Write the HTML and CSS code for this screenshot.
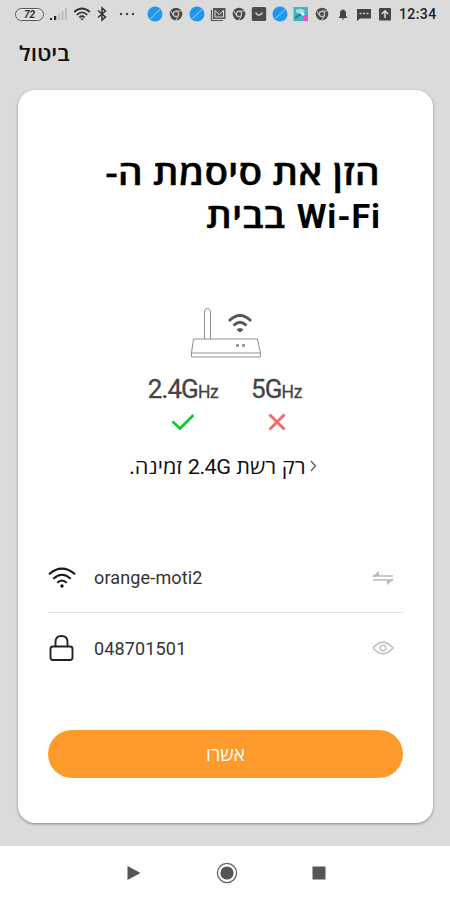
FILE: index.html
```html
<!DOCTYPE html>
<html lang="he">
<head>
<meta charset="utf-8">
<title>Wi-Fi</title>
<link rel="stylesheet" href="styles.css">
</head>
<body>
<svg width="0" height="0" class="defs">
  <symbol id="planet" viewBox="0 0 16 16"><circle cx="8" cy="8" r="7.5" fill="#1f97ec"/><path d="M3.500 12.500L13 3.500" stroke="#a8dcfa" stroke-width=".9"/></symbol>
  <symbol id="chrome" viewBox="0 0 16 16"><circle cx="8" cy="8" r="6.3" fill="#4b4b4b"/><path d="M8 5h5.4M5.4 9.5L2.8 5M10.6 9.5L8 14" stroke="#c8c8c8" stroke-width="1"/><circle cx="8" cy="8" r="2.6" fill="#4b4b4b" stroke="#c8c8c8" stroke-width="1.1"/></symbol>
</svg>
<div class="screen">
  <header class="status">
    <span class="battery">72</span>
    <svg class="signal" width="19" height="14" viewBox="0 0 19 14"><path d="M1 11h2v2H1zM5 9h2.2v4H5z" fill="#222"/><path d="M9 7h2v6H9zM12.500 4h2v9h-2zM16 1h2v12h-2z" fill="#bbb"/></svg>
    <svg class="wifi-s" width="18" height="16" viewBox="0 0 18 16" fill="none" stroke="#333" stroke-width="1.8"><path d="M1.200 6Q9-1 16.800 6M3.800 8.800Q9 4 14.200 8.800M6.300 11.400Q9 9 11.700 11.400"/><path d="M7.200 12.600h3.600L9 14.600z" fill="#333" stroke="none"/></svg>
    <svg class="bt" width="12" height="16" viewBox="0 0 12 16" fill="none" stroke="#333" stroke-width="1.500"><path d="M2 4.500L9.500 11 6 14V2l3.500 3L2 11.500"/></svg>
    <svg class="dots" width="16" height="4" viewBox="0 0 16 4" fill="#444"><circle cx="2" cy="2" r="1.200"/><circle cx="8" cy="2" r="1.200"/><circle cx="14" cy="2" r="1.200"/></svg>
    <div class="notes">
      <svg><use href="#planet"/></svg>
      <svg><use href="#chrome"/></svg>
      <svg><use href="#planet"/></svg>
      <svg viewBox="0 0 16 16"><path d="M1.500 4v10.500H13" fill="none" stroke="#555" stroke-width="1.200"/><path d="M3 2h12.500v11H3z" fill="#555"/><path d="M5 4.500v6.500h8.500V4.500L9.200 8.500z" fill="none" stroke="#ddd" stroke-width="1"/></svg>
      <svg><use href="#chrome"/></svg>
      <svg viewBox="0 0 16 16"><rect x=".8" y="1" width="14.400" height="14" rx="1.500" fill="#4b4b4b"/><path d="M4.500 6.500Q8 12 11.500 6.500" fill="none" stroke="#ccc" stroke-width="1.400"/></svg>
      <svg><use href="#planet"/></svg>
      <svg viewBox="0 0 16 16"><path d="M.5 1h14.500v14H.5z" fill="#3cb8c4"/><path d="M3 4q5-3 9 1l-3 4-6-3z" fill="#a6dce2"/><path d="M2 12l6-4" stroke="#267b89" stroke-width="2"/><path d="M10.500 9h4.500v6h-4.500z" fill="#f04dc1"/><path d="M7 6l5 2-2 2z" fill="#fff"/></svg>
      <svg><use href="#chrome"/></svg>
      <svg viewBox="0 0 16 16" fill="#444"><path d="M4 12v-1l1-1V7q0-3 3-3.500 3 .5 3 3.500v3l1 1v1zM7 12.500h2v1H7z"/></svg>
      <svg viewBox="0 0 16 16"><path d="M1 3h14v9.500H4L1 15z" fill="#444"/><path d="M3.500 7.500h2M7 7.500h2M10.500 7.500h2" stroke="#ccc" stroke-width="1.500"/></svg>
      <svg viewBox="0 0 16 16"><rect x="2" y="2" width="12" height="12.500" rx="1" fill="#444"/><path d="M8 12V5M4.800 8L8 4.800 11.200 8" fill="none" stroke="#ddd" stroke-width="1.500"/></svg>
    </div>
    <time>12:34</time>
  </header>
  <div class="cancel"><span dir="rtl">ביטול</span></div>
  <main class="card">
    <h1 dir="rtl"><span class="wide">הזן את סיסמת ה-</span><br><bdi>Wi-Fi</bdi> <span class="wide">בבית</span></h1>
    <svg class="router" width="72" height="52" viewBox="0 0 72 52" fill="none" stroke="#909090" stroke-width="1">
      <path d="M14.500 32V5q0-3.500 3-3.500t3 3.500v27M3.500 32h64l3 14v4H1.500v-4zM1.500 46h69"/>
      <g stroke="#555" stroke-width="2.600"><path d="M39 14Q50 3 61 14M43.500 18.500Q50 12 56.500 18.500"/></g>
      <path d="M46.500 22.500Q50 19.500 53.500 22.500L50 25.500z" fill="#555" stroke="none"/>
      <path d="M46 38.500h3M52 38.500h3" stroke="#8a8a8a" stroke-width="2.500"/>
    </svg>
    <div class="bands">
      <div class="band b24"><span class="ghz">2.4G<small>Hz</small></span>
        <svg width="24" height="18" viewBox="0 0 24 18"><path d="M1.500 8.500l7.500 7L22.500 2" fill="none" stroke="#16c72e" stroke-width="2.800"/></svg></div>
      <div class="band b5"><span class="ghz">5G<small>Hz</small></span>
        <svg width="18" height="18" viewBox="0 0 18 18"><path d="M1.500 1.500l15 15M16.500 1.500l-15 15" stroke="#f26d6d" stroke-width="3"/></svg></div>
    </div>
    <div class="only"><span dir="rtl" class="only-text">רק רשת <bdi>2.4G</bdi> זמינה.</span><svg width="7" height="12" viewBox="0 0 7 12"><path d="M1 1L5.500 6 1 11" fill="none" stroke="#555" stroke-width="1.200"/></svg></div>
    <div class="field first">
      <svg width="28" height="22" viewBox="0 0 28 22" fill="none" stroke="#181818" stroke-width="2"><path d="M1 7.300Q14-4 27 7.300M5.300 11.800Q14 3.800 22.700 11.800M9.300 15.800Q14 11.300 18.700 15.800"/><circle cx="14" cy="19" r="1.700" fill="#181818" stroke="none"/></svg>
      <span class="ssid">orange-moti2</span>
      <svg class="end" width="22" height="16" viewBox="0 0 22 16" fill="none" stroke="#bbb" stroke-width="1.700"><path d="M21 6H1M1 10h20"/><path d="M0 6.800L7 1v5zM22 9.200L15 15v-5z" fill="#bbb" stroke="none"/></svg>
    </div>
    <div class="field">
      <svg width="28" height="28" viewBox="0 0 28 28" fill="none" stroke="#222" stroke-width="1.900"><rect x="2.500" y="12.500" width="22" height="13.500" rx="2.500"/><path d="M7.500 12V8q0-6 6-6t6 6v4"/></svg>
      <span class="pass">048701501</span>
      <svg class="end" width="22" height="16" viewBox="0 0 22 16" fill="none" stroke="#bbb" stroke-width="1.300"><path d="M1 8Q11-3.500 21 8 11 19.500 1 8z"/><circle cx="11" cy="8" r="2.800"/></svg>
    </div>
    <button class="ok" dir="rtl">אשרו</button>
  </main>
  <nav>
    <svg width="14" height="16" viewBox="0 0 14 16"><path d="M.5 1L13.500 8 .5 15z" fill="#555"/></svg>
    <svg width="22" height="22" viewBox="0 0 22 22"><circle cx="11" cy="11" r="9.600" fill="none" stroke="#666" stroke-width="1.300"/><circle cx="11" cy="11" r="6.600" fill="#555"/></svg>
    <svg width="14" height="14" viewBox="0 0 14 14"><path d="M.5.5h13v13H.5z" fill="#555"/></svg>
  </nav>
</div>
</body>
</html>
```
FILE: styles.css
```css
* { box-sizing: border-box; }
body { margin: 0; font-family: Roboto, sans-serif; color: #111; }
svg { display: block; flex: none; }
.defs { position: absolute; }
.screen { width: 450px; height: 900px; background: #dbdbdb; display: flex; flex-direction: column; overflow: hidden; }
.status { height: 28px; display: flex; align-items: center; padding-left: 15px; flex: none; }
.battery { width: 29px; height: 13px; border: 1px solid #555; border-radius: 7px; font-size: 10px; line-height: 11px; font-weight: 700; font-style: italic; text-align: center; box-shadow: inset 0 0 0 1px #eee; color: #333; }
.signal { margin-left: 5px; }
.wifi-s { margin-left: 5px; }
.bt { margin-left: 5px; }
.dots { margin-left: 11px; }
.notes { display: flex; width: 251px; margin-left: 12px; }
.notes svg { width: 16px; height: 16px; margin-right: 4.900px; }
time { font-size: 14px; font-weight: 500; letter-spacing: .4px; margin-left: 1px; color: #222; }
.cancel { height: 62px; padding: 12px 0 0 19px; font-family: "Open Sans", sans-serif; font-size: 20px; line-height: 28px; font-weight: 600; flex: none; }
.cancel span { display: inline-block; transform: scaleX(1.13); transform-origin: left; }
bdi { font-family: Roboto, sans-serif; }
.card { width: 415px; height: 733px; margin-left: 18px; background: #fff; border-radius: 17px; box-shadow: 0 1px 3px rgba(0,0,0,.4); padding: 61px 30px 0; flex: none; display: flex; flex-direction: column; }
h1 { margin: 0; padding-right: 23px; height: 88px; font-family: "Open Sans", sans-serif; font-size: 34px; line-height: 43px; font-weight: 600; white-space: nowrap; color: #000; }
h1 bdi { font-weight: 700; letter-spacing: .9px; margin-right: -1px; margin-left: 3px; }
.wide { display: inline-block; transform: scaleX(1.145); transform-origin: right; -webkit-text-stroke: .3px #000; }
.router { margin: 68px 0 0 142px; }
.bands { display: flex; margin: 14px 0 0 100px; gap: 33px; height: 79px; }
.band { display: flex; flex-direction: column; align-items: center; }
.ghz { font-size: 26px; line-height: 32px; color: #444; white-space: nowrap; letter-spacing: -.9px; -webkit-text-stroke: .3px #444; }
.ghz small { font-size: 17.5px; letter-spacing: -.4px; }
.b24 { width: 70px; }
.b5 { width: 51px; }
.band svg { margin-top: 5px; }
.only { display: flex; align-items: center; height: 28px; margin: 0 0 0 81px; gap: 18px; font-family: "Open Sans", sans-serif; font-size: 20px; white-space: nowrap; }
.only-text { transform: scaleX(1.085); transform-origin: left; }
.only bdi { letter-spacing: -.5px; }
.field { display: flex; align-items: center; height: 70px; font-size: 18px; color: #333; }
.field.first { margin-top: 63px; border-bottom: 1px solid #e4e4e4; }
.field span { margin-left: 18px; letter-spacing: .15px; }
.end { margin: 0 9px 0 auto; }
.ok { margin-top: 47px; height: 48px; border: 0; border-radius: 24px; background: #ff9b2c; color: #fff; font: 19px "Open Sans", sans-serif; flex: none; }
nav { flex: 1; margin-top: 23px; background: #fff; display: flex; align-items: center; padding: 0 124px 0 127px; justify-content: space-between; }
```
